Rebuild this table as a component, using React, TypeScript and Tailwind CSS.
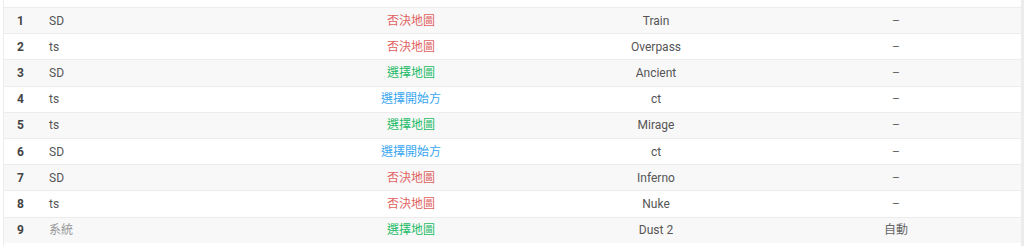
import React from "react";

type Row = { n: number; who: string; action: string; kind: "ban" | "pick" | "side"; map: string; note: string; sys?: boolean };

const rows: Row[] = [
  { n: 1, who: "SD", action: "否決地圖", kind: "ban", map: "Train", note: "–" },
  { n: 2, who: "ts", action: "否決地圖", kind: "ban", map: "Overpass", note: "–" },
  { n: 3, who: "SD", action: "選擇地圖", kind: "pick", map: "Ancient", note: "–" },
  { n: 4, who: "ts", action: "選擇開始方", kind: "side", map: "ct", note: "–" },
  { n: 5, who: "ts", action: "選擇地圖", kind: "pick", map: "Mirage", note: "–" },
  { n: 6, who: "SD", action: "選擇開始方", kind: "side", map: "ct", note: "–" },
  { n: 7, who: "SD", action: "否決地圖", kind: "ban", map: "Inferno", note: "–" },
  { n: 8, who: "ts", action: "否決地圖", kind: "ban", map: "Nuke", note: "–" },
  { n: 9, who: "系統", action: "選擇地圖", kind: "pick", map: "Dust 2", note: "自動", sys: true },
];

const kindColor: Record<Row["kind"], string> = {
  ban: "text-[#e06060]",
  pick: "text-[#22bb66]",
  side: "text-[#3aa6f2]",
};

export default function App() {
  return (
    <div
      className="w-[1024px] h-[246px] bg-white overflow-hidden flex"
      style={{ fontFamily: 'Roboto, "Noto Sans CJK TC", sans-serif' }}
    >
      <div className="w-[3px]" />
      <div className="flex-1 border-l border-[#ececec] flex flex-col pt-[7px]">
        {rows.map((r, i) => (
          <div
            key={r.n}
            className={`flex items-center h-[26.2px] border-t border-[#ececec] text-[12px] ${
              i % 2 === 0 ? "bg-[#f8f8f8]" : "bg-white"
            }`}
          >
            <div className="w-[32px] pl-[13px] font-bold text-[#444]">{r.n}</div>
            <div className={`w-[245px] pl-[13px] ${r.sys ? "text-[#999]" : "text-[#555]"}`}>{r.who}</div>
            <div className={`w-[260px] text-center ${kindColor[r.kind]}`}>{r.action}</div>
            <div className="w-[230px] text-center text-[#555]">{r.map}</div>
            <div className="flex-1 text-center text-[#666]">{r.note}</div>
          </div>
        ))}
      </div>
      <div className="w-[3px] bg-[#ececec]" />
    </div>
  );
}
